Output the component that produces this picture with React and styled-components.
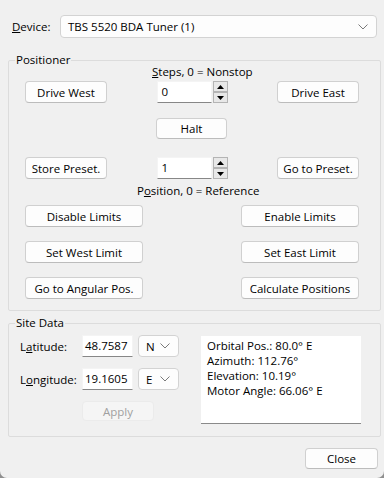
import React from "react";
import styled, { createGlobalStyle } from "styled-components";

const GlobalStyle = createGlobalStyle`
  html, body {
    margin: 0;
    padding: 0;
    background: #8f8f8f;
  }
  body {
    font-family: "Open Sans", "Noto Sans", sans-serif;
    font-size: 11.5px;
    color: #000;
  }
`;

const Window = styled.div`
  width: 384px;
  height: 478px;
  box-sizing: border-box;
  background: #f0f0f0;
  border-radius: 0 0 7px 7px;
  padding: 15px 4px 0 8px;
  display: flex;
  flex-direction: column;
`;

const DeviceRow = styled.div`
  display: flex;
  align-items: center;
  height: 23px;
  padding-left: 4px;
  margin-right: 3px;
`;

const Label = styled.span`
  width: ${(p) => p.$w || "auto"};
  flex: none;
  white-space: nowrap;
`;

const Combo = styled.div`
  box-sizing: border-box;
  width: ${(p) => p.$w || "auto"};
  flex: ${(p) => (p.$w ? "none" : "1")};
  height: ${(p) => p.$h || "23px"};
  background: #fdfdfd;
  border: 1px solid #d3d3d3;
  border-radius: 4px;
  display: flex;
  align-items: center;
  justify-content: space-between;
  padding: 0 8px 0 7px;
`;

const Chevron = () => (
  <svg width="10" height="6" viewBox="0 0 10 6">
    <path d="M0.5 0.5 L5 5 L9.5 0.5" fill="none" stroke="#7a7a7a" strokeWidth="1" />
  </svg>
);

const Group = styled.fieldset`
  margin: ${(p) => p.$mt || "0"} 0 0 0;
  padding: 0;
  border: 1px solid #dcdcdc;
  border-radius: 2px;
  box-sizing: border-box;
  width: 373px;
  height: ${(p) => p.$h};
  min-width: 0;
`;

const Legend = styled.legend`
  margin-left: 6px;
  padding: 0 1px;
  line-height: 14px;
`;

const PosBody = styled.div`
  margin-top: -3px;
  padding: 0 21px 0 16px;
  display: flex;
  flex-direction: column;
`;

const Caption = styled.div`
  padding-left: ${(p) => p.$indent}px;
  margin-top: ${(p) => p.$mt || 0}px;
  height: 15px;
  line-height: 15px;
  white-space: nowrap;
`;

const Row = styled.div`
  display: flex;
  justify-content: space-between;
  align-items: flex-start;
  margin-top: ${(p) => p.$mt || 0}px;
`;

const CenterRow = styled.div`
  display: flex;
  justify-content: center;
  margin-top: ${(p) => p.$mt || 0}px;
  padding-right: 1px;
`;

const Button = styled.button`
  box-sizing: border-box;
  width: ${(p) => p.$w}px;
  height: ${(p) => p.$h || 22}px;
  padding: 0;
  font: inherit;
  color: ${(p) => (p.disabled ? "#a0a0a0" : "#000")};
  background: ${(p) => (p.disabled ? "#f5f5f5" : "#fdfdfd")};
  border: 1px solid ${(p) => (p.disabled ? "#ebebeb" : "#d0d0d0")};
  border-bottom-color: ${(p) => (p.disabled ? "#ebebeb" : "#bcbcbc")};
  border-radius: 4px;
  flex: none;
`;

const Spin = styled.div`
  width: 71px;
  height: 22px;
  display: flex;
  justify-content: space-between;
  flex: none;
`;

const Edit = styled.div`
  box-sizing: border-box;
  width: ${(p) => p.$w}px;
  height: ${(p) => p.$h || 22}px;
  background: #fff;
  border: 1px solid #f4f4f4;
  border-bottom: 1px solid #878787;
  padding: 0 ${(p) => p.$pad ?? 4}px;
  line-height: ${(p) => (p.$h || 22) - 2}px;
  flex: none;
`;

const Arrows = styled.div`
  display: flex;
  flex-direction: column;
  justify-content: space-between;
  width: 15px;
`;

const ArrowBtn = styled.div`
  box-sizing: border-box;
  height: 11px;
  border: 1px solid #b4b4b4;
  background: #e8e8e8;
  display: flex;
  align-items: center;
  justify-content: center;
`;

const Tri = ({ up }) => (
  <svg width="7" height="4" viewBox="0 0 7 4">
    <path d={up ? "M0 4 L3.5 0 L7 4 Z" : "M0 0 L3.5 4 L7 0 Z"} fill="#000" />
  </svg>
);

const SpinBox = ({ value }) => (
  <Spin>
    <Edit $w={55}>{value}</Edit>
    <Arrows>
      <ArrowBtn>
        <Tri up />
      </ArrowBtn>
      <ArrowBtn>
        <Tri />
      </ArrowBtn>
    </Arrows>
  </Spin>
);

const SiteBody = styled.div`
  display: flex;
  padding: 5px 0 0 11px;
`;

const SiteLeft = styled.div`
  display: flex;
  flex-direction: column;
  width: 181px;
`;

const FieldRow = styled.div`
  display: flex;
  align-items: center;
  height: 22px;
  margin-top: ${(p) => p.$mt || 0}px;
`;

const Gap = styled.div`
  width: ${(p) => p.$w}px;
  flex: none;
`;

const ApplyRow = styled.div`
  padding-left: 62px;
  margin-top: 11px;
`;

const InfoBox = styled.div`
  box-sizing: border-box;
  width: 160px;
  height: 88px;
  margin-top: 1px;
  background: #fff;
  border-bottom: 1px solid #8a8a8a;
  padding: 2px 6px;
  line-height: 15px;
`;

const Footer = styled.div`
  display: flex;
  justify-content: flex-end;
  margin-top: 11px;
  padding-right: 2px;
`;

export default function App() {
  return (
    <>
      <GlobalStyle />
      <Window>
        <DeviceRow>
          <Label $w="48px">
            <u>D</u>evice:
          </Label>
          <Combo>
            <span>TBS 5520 BDA Tuner (1)</span>
            <Chevron />
          </Combo>
        </DeviceRow>

        <Group $mt="15px" $h="258px">
          <Legend>Positioner</Legend>
          <PosBody>
            <Caption $indent={127}>
              <u>S</u>teps, 0 = Nonstop
            </Caption>
            <Row $mt={2}>
              <Button $w={82}>Drive West</Button>
              <SpinBox value="0" />
              <Button $w={82}>Drive East</Button>
            </Row>
            <CenterRow $mt={15}>
              <Button $w={71} $h={21}>Halt</Button>
            </CenterRow>
            <Row $mt={18}>
              <Button $w={82}>Store Preset.</Button>
              <SpinBox value="1" />
              <Button $w={82}>Go to Preset.</Button>
            </Row>
            <Caption $indent={112} $mt={4}>
              P<u>o</u>sition, 0 = Reference
            </Caption>
            <Row $mt={7}>
              <Button $w={118}>Disable Limits</Button>
              <Button $w={118}>Enable Limits</Button>
            </Row>
            <Row $mt={14}>
              <Button $w={118}>Set West Limit</Button>
              <Button $w={118}>Set East Limit</Button>
            </Row>
            <Row $mt={14}>
              <Button $w={118}>Go to Angular Pos.</Button>
              <Button $w={118}>Calculate Positions</Button>
            </Row>
          </PosBody>
        </Group>

        <Group $mt="5px" $h="121px">
          <Legend>Site Data</Legend>
          <SiteBody>
            <SiteLeft>
              <FieldRow>
                <Label $w="62px">
                  L<u>a</u>titude:
                </Label>
                <Edit $w={51} $pad={2}>48.7587</Edit>
                <Gap $w={5} />
                <Combo $w="41px" $h="22px">
                  <span>N</span>
                  <Chevron />
                </Combo>
              </FieldRow>
              <FieldRow $mt={11}>
                <Label $w="62px">
                  L<u>o</u>ngitude:
                </Label>
                <Edit $w={51} $pad={2}>19.1605</Edit>
                <Gap $w={5} />
                <Combo $w="41px" $h="22px">
                  <span>E</span>
                  <Chevron />
                </Combo>
              </FieldRow>
              <ApplyRow>
                <Button $w={72} $h={20} disabled>
                  Apply
                </Button>
              </ApplyRow>
            </SiteLeft>
            <InfoBox>
              <div>Orbital Pos.: 80.0° E</div>
              <div>Azimuth: 112.76°</div>
              <div>Elevation: 10.19°</div>
              <div>Motor Angle: 66.06° E</div>
            </InfoBox>
          </SiteBody>
        </Group>

        <Footer>
          <Button $w={73} $h={21}>Close</Button>
        </Footer>
      </Window>
    </>
  );
}
